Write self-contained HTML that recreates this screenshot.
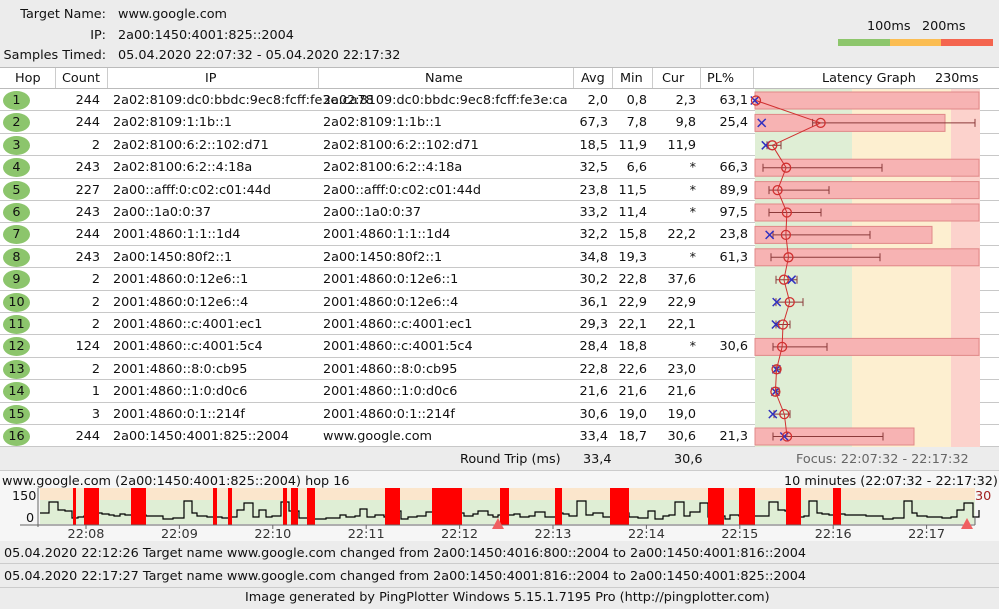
<!DOCTYPE html><html><head><style>
*{margin:0;padding:0;box-sizing:border-box}
body{width:999px;height:609px;background:#ececec;font-family:"DejaVu Sans","Liberation Sans",sans-serif;font-size:12.8px;color:#111;position:relative;overflow:hidden}
.a{position:absolute;white-space:nowrap}
.r{text-align:right}
.row{position:absolute;left:0;width:999px;height:22.4px;background:#fff;border-bottom:1px solid #c8c8c8}
.hop{position:absolute;left:3px;top:2px;width:27px;height:19px;border-radius:50%;background:#8cc56c;text-align:center;line-height:19px}
</style></head><body>
<div class="a r" style="left:0;width:106px;top:7px">Target Name:</div>
<div class="a" style="left:118px;top:7px">www.google.com</div>
<div class="a r" style="left:0;width:106px;top:28px">IP:</div>
<div class="a" style="left:118px;top:28px">2a00:1450:4001:825::2004</div>
<div class="a r" style="left:0;width:106px;top:48px">Samples Timed:</div>
<div class="a" style="left:118px;top:48px">05.04.2020 22:07:32 - 05.04.2020 22:17:32</div>
<div class="a" style="left:867px;top:19px">100ms</div><div class="a" style="left:922px;top:19px">200ms</div>
<div class="a" style="left:838px;top:39px;width:52px;height:7px;background:#8dc66c"></div>
<div class="a" style="left:890px;top:39px;width:51px;height:7px;background:#fbbd52"></div>
<div class="a" style="left:941px;top:39px;width:52px;height:7px;background:#f4654f"></div>
<div class="a" style="left:0;top:67px;width:999px;height:22px;background:#fff;border-top:1px solid #bbb;border-bottom:1px solid #bbb"></div>
<div class="a" style="left:55px;top:68px;width:1px;height:20px;background:#ccc"></div>
<div class="a" style="left:107px;top:68px;width:1px;height:20px;background:#ccc"></div>
<div class="a" style="left:318px;top:68px;width:1px;height:20px;background:#ccc"></div>
<div class="a" style="left:573px;top:68px;width:1px;height:20px;background:#ccc"></div>
<div class="a" style="left:612px;top:68px;width:1px;height:20px;background:#ccc"></div>
<div class="a" style="left:652px;top:68px;width:1px;height:20px;background:#ccc"></div>
<div class="a" style="left:700px;top:68px;width:1px;height:20px;background:#ccc"></div>
<div class="a" style="left:753px;top:68px;width:1px;height:20px;background:#ccc"></div>
<div class="a" style="left:15px;top:71px">Hop</div><div class="a" style="left:62px;top:71px">Count</div>
<div class="a" style="left:205px;top:71px">IP</div><div class="a" style="left:425px;top:71px">Name</div>
<div class="a" style="left:581px;top:71px">Avg</div><div class="a" style="left:620px;top:71px">Min</div>
<div class="a" style="left:662px;top:71px">Cur</div><div class="a" style="left:707px;top:71px">PL%</div>
<div class="a" style="left:822px;top:71px">Latency Graph</div><div class="a" style="left:935px;top:71px">230ms</div>
<div id="rows"></div>
<svg class="a" style="left:0;top:0" width="999" height="609">
<rect x="755" y="89" width="97" height="358" fill="#dfeed5"/>
<rect x="852" y="89" width="99" height="358" fill="#fdefd0"/>
<rect x="951" y="89" width="29" height="358" fill="#fcd2cc"/>
<g id="g"></g>
</svg>
<div class="a" style="left:0;top:448px;width:999px;height:23px;background:#ececec;border-bottom:1px solid #ccc"></div>
<div class="a" style="left:460px;top:452px">Round Trip (ms)</div>
<div class="a" style="left:583px;top:452px">33,4</div><div class="a" style="left:674px;top:452px">30,6</div>
<div class="a" style="left:796px;top:452px;color:#666">Focus: 22:07:32 - 22:17:32</div>
<div class="a" style="left:0;top:471px;width:999px;height:70px;background:#f6f6f6"></div>
<svg class="a" style="left:0;top:471px" width="999" height="70" id="ch"></svg>
<div class="a" style="left:2px;top:474px">www.google.com (2a00:1450:4001:825::2004) hop 16</div>
<div class="a" style="left:784px;top:474px">10 minutes (22:07:32 - 22:17:32)</div>
<div class="a" style="left:975px;top:489px;color:#a02020">30</div>
<div class="a" style="left:12px;top:489px">150</div><div class="a" style="left:26px;top:511px">0</div>
<div class="a" style="left:0;top:541px;width:999px;height:23px;border-bottom:1px solid #ccc;background:#ececec"></div>
<div class="a" style="left:4px;top:546px">05.04.2020 22:12:26 Target name www.google.com changed from 2a00:1450:4016:800::2004 to 2a00:1450:4001:816::2004</div>
<div class="a" style="left:0;top:564px;width:999px;height:24px;border-bottom:1px solid #ccc;background:#ececec"></div>
<div class="a" style="left:4px;top:569px">05.04.2020 22:17:27 Target name www.google.com changed from 2a00:1450:4001:816::2004 to 2a00:1450:4001:825::2004</div>
<div class="a" style="left:245px;top:590px">Image generated by PingPlotter Windows 5.15.1.7195 Pro (http://pingplotter.com)</div>
<script>
var D=[
[244,"2a02:8109:dc0:bbdc:9ec8:fcff:fe3e:ca78","2a02:8109:dc0:bbdc:9ec8:fcff:fe3e:ca","2,0","0,8","2,3","63,1",2,0.8,0,979,760,0],
[244,"2a02:8109:1:1b::1","2a02:8109:1:1b::1","67,3","7,8","9,8","25,4",67.3,7.8,975,945,0,0],
[2,"2a02:8100:6:2::102:d71","2a02:8100:6:2::102:d71","18,5","11,9","11,9","",18.5,11.9,781,0,767,0],
[243,"2a02:8100:6:2::4:18a","2a02:8100:6:2::4:18a","32,5","6,6","*","66,3",32.5,null,882,979,763,0],
[227,"2a00::afff:0:c02:c01:44d","2a00::afff:0:c02:c01:44d","23,8","11,5","*","89,9",23.8,null,829,979,769,0],
[243,"2a00::1a0:0:37","2a00::1a0:0:37","33,2","11,4","*","97,5",33.2,null,821,979,769,0],
[244,"2001:4860:1:1::1d4","2001:4860:1:1::1d4","32,2","15,8","22,2","23,8",32.2,15.8,870,932,773,0],
[243,"2a00:1450:80f2::1","2a00:1450:80f2::1","34,8","19,3","*","61,3",34.8,null,880,979,771,0],
[2,"2001:4860:0:12e6::1","2001:4860:0:12e6::1","30,2","22,8","37,6","",30.2,38,797,0,776,0],
[2,"2001:4860:0:12e6::4","2001:4860:0:12e6::4","36,1","22,9","22,9","",36.1,22.9,803,0,776,0],
[2,"2001:4860::c:4001:ec1","2001:4860::c:4001:ec1","29,3","22,1","22,1","",29.3,22.1,790,0,776,0],
[124,"2001:4860::c:4001:5c4","2001:4860::c:4001:5c4","28,4","18,8","*","30,6",28.4,null,827,979,773,0],
[2,"2001:4860::8:0:cb95","2001:4860::8:0:cb95","22,8","22,6","23,0","",22.8,22.6,780,0,776,0],
[1,"2001:4860::1:0:d0c6","2001:4860::1:0:d0c6","21,6","21,6","21,6","",21.6,21.6,779,0,776,0],
[3,"2001:4860:0:1::214f","2001:4860:0:1::214f","30,6","19,0","19,0","",30.6,19,790,0,774,0],
[244,"2a00:1450:4001:825::2004","www.google.com","33,4","18,7","30,6","21,3",33.4,30.6,883,914,773,0]];
var h="",g="",pts=[];
D.forEach(function(d,i){var y=89+i*22.4;
h+='<div class="row" style="top:'+y+'px"><div class="hop">'+(i+1)+'</div>'+
'<div class="a r" style="left:55px;width:45px;top:4px">'+d[0]+'</div>'+
'<div class="a" style="left:113px;top:4px">'+d[1]+'</div>'+
'<div class="a" style="left:323px;top:4px">'+d[2]+'</div>'+
'<div class="a r" style="left:573px;width:35px;top:4px">'+d[3]+'</div>'+
'<div class="a r" style="left:612px;width:35px;top:4px">'+d[4]+'</div>'+
'<div class="a r" style="left:652px;width:44px;top:4px">'+d[5]+'</div>'+
'<div class="a r" style="left:700px;width:48px;top:4px">'+d[6]+'</div></div>';
var cy=y+11.5,cx=754+d[7]*0.99;
if(d[10])g+='<rect x="755" y="'+(y+3)+'" width="'+(d[10]-755)+'" height="17" fill="#f7b3b3" stroke="#e08888"/>';
if(d[9]){var l=d[11]||cx-8;g+='<line x1="'+l+'" y1="'+cy+'" x2="'+d[9]+'" y2="'+cy+'" stroke="#8a3a3a"/><line x1="'+d[9]+'" y1="'+(cy-4)+'" x2="'+d[9]+'" y2="'+(cy+4)+'" stroke="#8a3a3a"/><line x1="'+l+'" y1="'+(cy-4)+'" x2="'+l+'" y2="'+(cy+4)+'" stroke="#8a3a3a"/>';}
pts.push(cx+','+cy);
if(d[8]!=null){var mx=754+d[8]*0.99;g+='<path d="M'+(mx-4)+' '+(cy-4)+'l8 8M'+(mx+4)+' '+(cy-4)+'l-8 8" stroke="#3030c0" stroke-width="1.5"/>';}
g+='<circle cx="'+cx+'" cy="'+cy+'" r="4.5" fill="none" stroke="#d03030" stroke-width="1.3"/>';
});
document.getElementById('rows').innerHTML=h;
document.getElementById('g').innerHTML=g+'<polyline points="'+pts.join(' ')+'" fill="none" stroke="#d03030" stroke-width="1"/>';
var c='<rect x="40" y="17" width="935" height="12" fill="#fbe6cc"/><rect x="40" y="29" width="935" height="24" fill="#dfeed5"/>';
var line="M40 42",x=40,s=7;
while(x<975){var v=[42,44,45,43,38,46,44,30,44,45,40,46][s%12];s=(s*7+3)%97;x+=5+s%6;line+=" H"+x+" V"+(v+(s%3));}
c+='<path d="'+line+'" fill="none" stroke="#000" stroke-width="1.2"/>';
[[73,76],[84,99],[131,146],[213,217],[228,232],[283,287],[291,298],[307,315],[385,400],[432,462],[500,509],[555,562],[610,629],[708,724],[739,755],[786,801],[833,841]].forEach(function(b){c+='<rect x="'+b[0]+'" y="17" width="'+(b[1]-b[0])+'" height="37" fill="#f00"/>';});
c+='<line x1="20" y1="54" x2="975" y2="54" stroke="#666"/><line x1="38" y1="17" x2="38" y2="56" stroke="#666"/><line x1="975" y1="45" x2="975" y2="54" stroke="#666"/>';
["22:08","22:09","22:10","22:11","22:12","22:13","22:14","22:15","22:16","22:17"].forEach(function(t,i){var tx=86+i*93.4;c+='<line x1="'+tx+'" y1="54" x2="'+tx+'" y2="58" stroke="#666"/><text x="'+tx+'" y="67" font-size="12.8" text-anchor="middle" font-family="DejaVu Sans" fill="#333">'+t+'</text>';});
c+='<path d="M492 58h12l-6-11z" fill="#f06060"/><path d="M961 58h12l-6-11z" fill="#f06060"/>';
document.getElementById('ch').innerHTML=c;
</script>
</body></html>
